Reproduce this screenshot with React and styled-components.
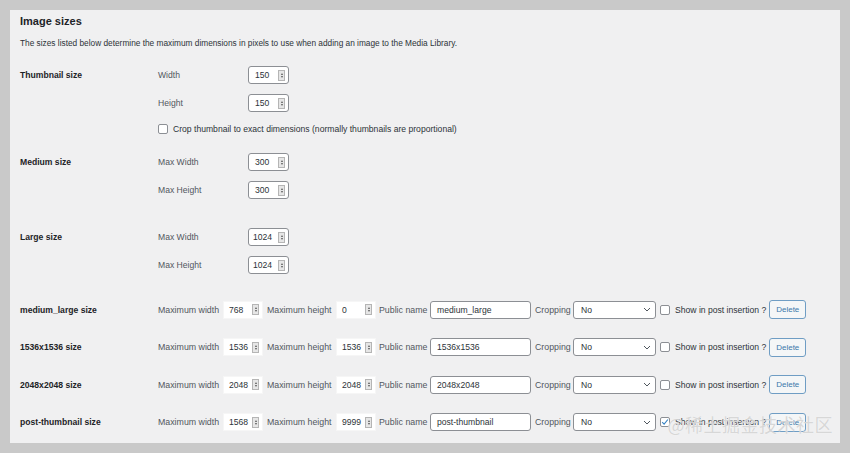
import React from "react";
import styled, { createGlobalStyle } from "styled-components";

const Global = createGlobalStyle`
  html, body {
    margin: 0;
    padding: 0;
    background: #c9c9c9;
    font-family: "Liberation Sans", Arial, sans-serif;
    color: #1d2327;
  }
`;

const Page = styled.div`
  width: 850px;
  height: 453px;
  padding: 10px;
  box-sizing: border-box;
`;

const Panel = styled.div`
  position: relative;
  background: #f0f0f1;
  height: 433px;
  width: 830px;
  padding: 0 10px;
  box-sizing: border-box;
  overflow: hidden;
`;

const Title = styled.h2`
  margin: 0;
  height: 22px;
  line-height: 22px;
  font-size: 11px;
  font-weight: 700;
  color: #1d2327;
`;

const Description = styled.p`
  margin: 0;
  height: 22px;
  line-height: 22px;
  font-size: 8.3px;
  color: #2c3338;
`;

const Section = styled.div`
  display: flex;
  margin-top: ${(p) => p.$top || 0}px;
`;

const SectionLabel = styled.div`
  width: 138px;
  flex: none;
  height: 28px;
  line-height: 28px;
  font-size: 8.6px;
  font-weight: 700;
  color: #1d2327;
`;

const Fields = styled.div`
  display: flex;
  flex-direction: column;
`;

const FieldRow = styled.div`
  display: flex;
  align-items: center;
  height: ${(p) => p.$h || 28}px;
`;

const FieldLabel = styled.span`
  width: 90px;
  font-size: 8.6px;
  color: #50575e;
`;

const NumberBox = styled.div`
  display: flex;
  align-items: center;
  justify-content: space-between;
  width: ${(p) => p.$w || 41}px;
  height: 18px;
  flex: none;
  box-sizing: border-box;
  padding: 0 3px 0 ${(p) => p.$pl || 6}px;
  background: #fff;
  border: 1px solid ${(p) => (p.$plain ? "#f6f6f6" : "#8c8f94")};
  border-radius: ${(p) => (p.$plain ? 0 : 3)}px;
  font-size: 8.6px;
  color: #2c3338;
`;

const Spinner = styled.span`
  display: flex;
  flex-direction: column;
  align-items: center;
  justify-content: center;
  gap: 1px;
  width: 7px;
  height: 11px;
  background: #e6e6e6;
  border: 1px solid #b5b5b5;
  box-sizing: border-box;
`;

const Arrow = styled.span`
  width: 0;
  height: 0;
  border-left: 1.5px solid transparent;
  border-right: 1.5px solid transparent;
  ${(p) =>
    p.$down
      ? "border-top: 2px solid #555;"
      : "border-bottom: 2px solid #555;"}
`;

const CheckRow = styled.label`
  display: flex;
  align-items: center;
  gap: 5px;
  font-size: 8.6px;
  color: #2c3338;
  white-space: nowrap;
`;

const Box = styled.span`
  display: inline-flex;
  align-items: center;
  justify-content: center;
  width: 10px;
  height: 10px;
  flex: none;
  box-sizing: border-box;
  border: 1px solid #8c8f94;
  border-radius: 2px;
  background: #fff;
`;

const SizeRow = styled.div`
  display: flex;
  align-items: center;
  height: 37.5px;
`;

const SizeName = styled.div`
  width: 138px;
  flex: none;
  font-size: 8.6px;
  font-weight: 700;
  color: #1d2327;
`;

const Inline = styled.span`
  flex: none;
  width: ${(p) => p.$w}px;
  margin-left: ${(p) => p.$l || 0}px;
  font-size: 8.8px;
  color: #50575e;
  white-space: nowrap;
`;

const TextInput = styled.div`
  flex: none;
  width: 101px;
  height: 18px;
  box-sizing: border-box;
  border: 1px solid #8c8f94;
  border-radius: 3px;
  background: #fff;
  padding-left: 6px;
  line-height: 16px;
  font-size: 8.6px;
  color: #2c3338;
  margin-right: 4px;
`;

const Select = styled.div`
  display: flex;
  align-items: center;
  justify-content: space-between;
  flex: none;
  width: 83px;
  height: 18px;
  box-sizing: border-box;
  border: 1px solid #8c8f94;
  border-radius: 3px;
  background: #fff;
  padding: 0 4px 0 7px;
  font-size: 8.6px;
  color: #2c3338;
  margin-right: 4px;
`;

const DeleteButton = styled.button`
  width: 37px;
  height: 19px;
  padding: 0;
  margin-left: 3px;
  box-sizing: border-box;
  border: 1px solid #6f9dc4;
  border-radius: 3px;
  background: #f4f6f7;
  color: #3b78ab;
  font-family: inherit;
  font-size: 8px;
`;

const Watermark = styled.div`
  position: absolute;
  right: 7px;
  bottom: 6px;
  font-family: "Noto Sans CJK SC", sans-serif;
  font-size: 18px;
  color: rgba(205, 205, 205, 0.8);
  text-shadow: 0 0 1px rgba(255, 255, 255, 0.9);
  letter-spacing: 0.5px;
`;

const Spin = () => (
  <Spinner>
    <Arrow />
    <Arrow $down />
  </Spinner>
);

const Num = ({ value, plain, w, pl }) => (
  <NumberBox $plain={plain} $w={w} $pl={pl}>
    <span>{value}</span>
    <Spin />
  </NumberBox>
);

const Chevron = () => (
  <svg width="8" height="5" viewBox="0 0 8 5">
    <path d="M1 1l3 3 3-3" fill="none" stroke="#50575e" strokeWidth="1" />
  </svg>
);

const Tick = () => (
  <svg width="8" height="8" viewBox="0 0 8 8">
    <path d="M1.2 4.2l1.9 1.9 3.8-4.6" fill="none" stroke="#3582c4" strokeWidth="1.1" />
  </svg>
);

const customSizes = [
  { name: "medium_large size", w: "768", h: "0", pub: "medium_large", show: false },
  { name: "1536x1536 size", w: "1536", h: "1536", pub: "1536x1536", show: false },
  { name: "2048x2048 size", w: "2048", h: "2048", pub: "2048x2048", show: false },
  { name: "post-thumbnail size", w: "1568", h: "9999", pub: "post-thumbnail", show: true },
];

const App = () => {
  return (
    <Page>
      <Global />
      <Panel>
        <Title>Image sizes</Title>
        <Description>
          The sizes listed below determine the maximum dimensions in pixels to use when adding an
          image to the Media Library.
        </Description>

        <Section $top={7}>
          <SectionLabel>Thumbnail size</SectionLabel>
          <Fields>
            <FieldRow>
              <FieldLabel>Width</FieldLabel>
              <Num value="150" />
            </FieldRow>
            <FieldRow>
              <FieldLabel>Height</FieldLabel>
              <Num value="150" />
            </FieldRow>
            <FieldRow $h={24}>
              <CheckRow>
                <Box />
                Crop thumbnail to exact dimensions (normally thumbnails are proportional)
              </CheckRow>
            </FieldRow>
          </Fields>
        </Section>

        <Section $top={7}>
          <SectionLabel>Medium size</SectionLabel>
          <Fields>
            <FieldRow>
              <FieldLabel>Max Width</FieldLabel>
              <Num value="300" />
            </FieldRow>
            <FieldRow>
              <FieldLabel>Max Height</FieldLabel>
              <Num value="300" />
            </FieldRow>
          </Fields>
        </Section>

        <Section $top={19}>
          <SectionLabel>Large size</SectionLabel>
          <Fields>
            <FieldRow>
              <FieldLabel>Max Width</FieldLabel>
              <Num value="1024" pl={4} />
            </FieldRow>
            <FieldRow>
              <FieldLabel>Max Height</FieldLabel>
              <Num value="1024" pl={4} />
            </FieldRow>
          </Fields>
        </Section>

        <div style={{ marginTop: 12 }}>
          {customSizes.map((s) => (
            <SizeRow key={s.name}>
              <SizeName>{s.name}</SizeName>
              <Inline $w={65}>Maximum width</Inline>
              <Num value={s.w} plain w={40} pl={5} />
              <Inline $w={69} $l={4}>Maximum height</Inline>
              <Num value={s.h} plain w={40} pl={5} />
              <Inline $w={51} $l={3}>Public name</Inline>
              <TextInput>{s.pub}</TextInput>
              <Inline $w={38}>Cropping</Inline>
              <Select>
                <span>No</span>
                <Chevron />
              </Select>
              <CheckRow>
                <Box>{s.show && <Tick />}</Box>
                Show in post insertion ?
              </CheckRow>
              <DeleteButton>Delete</DeleteButton>
            </SizeRow>
          ))}
        </div>

        <Watermark>@稀土掘金技术社区</Watermark>
      </Panel>
    </Page>
  );
};

export default App;
